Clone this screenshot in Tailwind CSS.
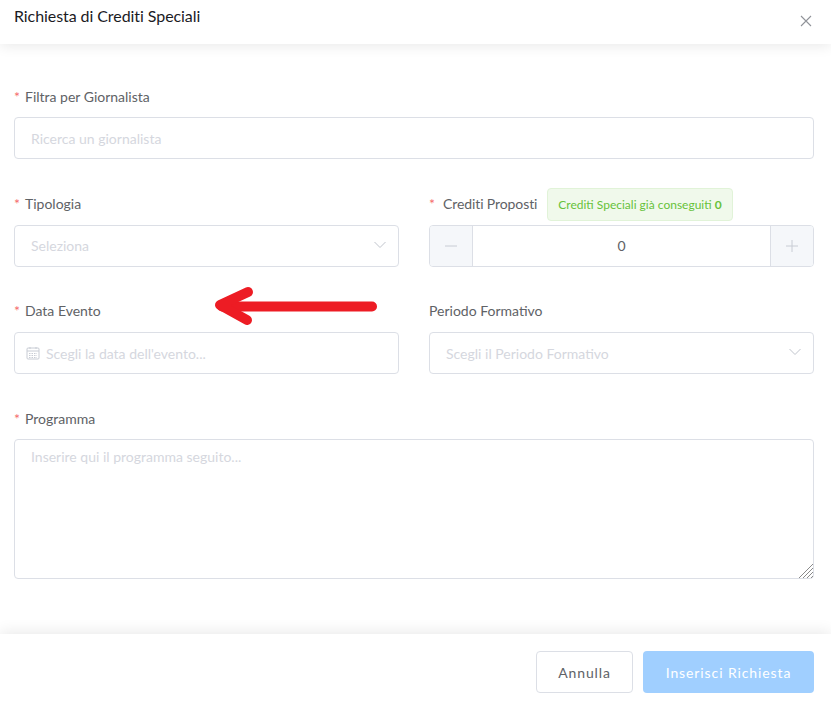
<!DOCTYPE html>
<html lang="it">
<head>
    <meta charset="UTF-8">
    <meta name="viewport" content="width=device-width, initial-scale=1.0">
    <title>Richiesta di Crediti Speciali</title>
    <script src="https://cdn.jsdelivr.net/npm/@tailwindcss/browser@4"></script>
</head>
<body class="bg-white font-['Lato','Noto_Sans',sans-serif] text-[14px] text-[#606266] h-[710px] overflow-hidden">
    <div class="relative h-[710px] flex flex-col">
        <!-- header -->
        <div class="relative h-[44px] shrink-0 flex items-start justify-between pl-[14px] pr-[19px] bg-white shadow-[0_2px_14px_0_rgba(0,0,0,0.09)]">
            <h1 class="text-[16px] leading-[32px] tracking-[-0.07px] text-[#1b1b1f]">Richiesta di Crediti Speciali</h1>
            <svg class="mt-[15px]" width="12" height="12" viewBox="0 0 12 12" fill="none" stroke="#909399" stroke-width="1.1"><path d="M1 1l10 10M11 1L1 11"/></svg>
        </div>

        <!-- form -->
        <div class="flex-1 pl-[14px] pr-[17px] pt-[42px]">
            <label class="flex items-center h-[22px] pb-[2px]"><span class="text-[#f56c6c] w-[11px]">*</span>Filtra per Giornalista</label>
            <input class="mt-[9px] block w-full h-[42px] border border-[#dcdfe6] rounded-[4px] px-[16px] outline-none placeholder:text-[#d5d7de]" placeholder="Ricerca un giornalista">

            <div class="grid grid-cols-2 gap-x-[30px] mt-[29px]">
                <div>
                    <label class="flex items-center h-[33px] pb-[2px]"><span class="text-[#f56c6c] w-[11px]">*</span>Tipologia</label>
                    <div class="mt-[4px] h-[42px] border border-[#dcdfe6] rounded-[4px] px-[16px] pb-[2px] flex items-center justify-between text-[#d5d7de]">
                        Seleziona
                        <svg class="-mr-[4px]" width="12" height="8" viewBox="0 0 12 8" fill="none" stroke="#c0c4cc" stroke-width="1"><path d="M.5 1l5.500 5.500L11.500 1"/></svg>
                    </div>
                </div>
                <div>
                    <div class="flex items-center h-[33px]">
                        <label class="flex items-center w-[110px] pb-[2px] tracking-[-0.1px]"><span class="text-[#f56c6c] w-[14px]">*</span>Crediti Proposti</label>
                        <span class="ml-[8px] h-[33px] w-[186px] flex items-center justify-center bg-[#f0f9eb] border border-[#e1f3d8] rounded-[4px] text-[12px] text-[#67c23a]">Crediti Speciali già conseguiti&nbsp;<b>0</b></span>
                    </div>
                    <div class="mt-[4px] h-[42px] border border-[#dcdfe6] rounded-[4px] flex items-center overflow-hidden">
                        <div class="w-[43px] h-full bg-[#f5f7fa] border-r border-[#dcdfe6] flex items-center justify-center">
                            <svg width="12" height="12" viewBox="0 0 12 12" stroke="#c8ccd4"><path d="M0 6h12"/></svg>
                        </div>
                        <div class="flex-1 text-center pb-[2px]">0</div>
                        <div class="w-[43px] h-full bg-[#f5f7fa] border-l border-[#dcdfe6] flex items-center justify-center">
                            <svg width="12" height="12" viewBox="0 0 12 12" stroke="#c8ccd4"><path d="M0 6h12M6 0v12"/></svg>
                        </div>
                    </div>
                </div>
            </div>

            <div class="grid grid-cols-2 gap-x-[30px] mt-[33px]">
                <div>
                    <label class="flex items-center h-[22px] pb-[2px]"><span class="text-[#f56c6c] w-[11px]">*</span>Data Evento</label>
                    <div class="mt-[10px] h-[42px] border border-[#dcdfe6] rounded-[4px] pl-[11px] flex items-center gap-[6px] text-[#d5d7de]">
                        <svg width="14" height="14" viewBox="0 0 14 14" fill="none" stroke="#c8ccd4"><rect x="1" y="2" width="12" height="11" rx="1"/><path d="M1 5h12M4 1v2M10 1v2"/><path d="M3 7.500h8M3 9.500h8M3 11.500h8" stroke-dasharray="1.500 1"/></svg>
                        Scegli la data dell'evento...
                    </div>
                </div>
                <div>
                    <label class="flex items-center h-[22px] pb-[2px]">Periodo Formativo</label>
                    <div class="mt-[10px] h-[42px] border border-[#dcdfe6] rounded-[4px] px-[16px] flex items-center justify-between text-[#d5d7de]">
                        Scegli il Periodo Formativo
                        <svg class="-mr-[4px] -mt-[2px]" width="12" height="8" viewBox="0 0 12 8" fill="none" stroke="#c0c4cc" stroke-width="1"><path d="M.5 1l5.500 5.500L11.500 1"/></svg>
                    </div>
                </div>
            </div>

            <label class="flex items-center h-[22px] mt-[34px] pb-[2px]"><span class="text-[#f56c6c] w-[11px]">*</span>Programma</label>
            <div class="relative mt-[9px]">
                <textarea class="block w-full h-[140px] border border-[#dcdfe6] rounded-[4px] px-[16px] py-[6px] outline-none resize-none placeholder:text-[#d5d7de]" placeholder="Inserire qui il programma seguito..."></textarea>
                <svg class="absolute right-[1px] bottom-[1px]" width="15" height="15" viewBox="0 0 15 15" fill="none" stroke="#8a8a8a" stroke-width="1"><path d="M1 15L15 1M5 15L15 5M9 15L15 9M13 15L15 13"/></svg>
            </div>
        </div>

        <!-- footer -->
        <div class="relative h-[76px] shrink-0 flex items-center justify-end gap-[10px] pl-[14px] pr-[17px] pb-[1px] bg-white shadow-[0_-2px_14px_0_rgba(0,0,0,0.09)]">
            <button class="w-[97px] h-[42px] pt-[2px] border border-[#dcdfe6] rounded-[4px] bg-white tracking-[0.9px]">Annulla</button>
            <button class="w-[171px] h-[42px] pt-[2px] rounded-[4px] bg-[#a0cfff] text-white tracking-[0.9px]">Inserisci Richiesta</button>
        </div>

        <!-- freccia annotazione -->
        <svg class="absolute left-[210px] top-[282px]" width="172" height="48" viewBox="0 0 172 48" fill="none" stroke="#ed1c24" stroke-width="10" stroke-linecap="round" stroke-linejoin="round">
            <path d="M162 24.500H12"/>
            <path d="M38 10L10 23L37 38"/>
        </svg>
    </div>
</body>
</html>
